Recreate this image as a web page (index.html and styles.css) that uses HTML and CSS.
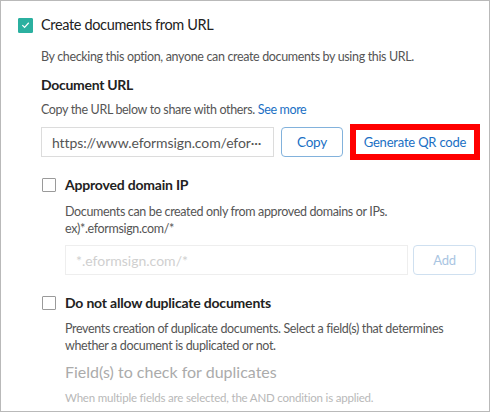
FILE: index.html
```html
<!DOCTYPE html>
<html>
<head>
<meta charset="utf-8">
<link rel="stylesheet" href="styles.css">
</head>
<body>
<div class="panel">
  <div class="opt-row main">
    <span class="cb checked"><svg viewBox="0 0 14 14" width="14" height="14"><path d="M3.6 7.1 L6 9.5 L10.5 4.6" fill="none" stroke="#fff" stroke-width="1.3"/></svg></span>
    <span class="title">Create documents from URL</span>
  </div>
  <div class="body">
    <p class="desc d1">By checking this option, anyone can create documents by using this URL.</p>
    <h3 class="sub">Document URL</h3>
    <p class="desc d2">Copy the URL below to share with others. <a class="link">See more</a></p>
    <div class="url-row">
      <div class="input url">https://www.eformsign.com/efor···</div>
      <button class="btn copy">Copy</button>
      <div class="hl"><button class="btn qr">Generate QR code</button></div>
    </div>
    <div class="opt-row sub-opt o2">
      <span class="cb"></span>
      <span class="title">Approved domain IP</span>
    </div>
    <div class="inner">
      <p class="desc d3">Documents can be created only from approved domains or IPs.<br>ex)*.eformsign.com/*</p>
      <div class="url-row r2">
        <div class="input dis">*.eformsign.com/*</div>
        <button class="btn add">Add</button>
      </div>
    </div>
    <div class="opt-row sub-opt o3">
      <span class="cb"></span>
      <span class="title">Do not allow duplicate documents</span>
    </div>
    <div class="inner">
      <p class="desc d4">Prevents creation of duplicate documents. Select a field(s) that determines<br>whether a document is duplicated or not.</p>
      <h3 class="muted">Field(s) to check for duplicates</h3>
      <p class="small">When multiple fields are selected, the AND condition is applied.</p>
    </div>
  </div>
</div>
</body>
</html>
```
FILE: styles.css
```css
* { box-sizing: border-box; }
html, body { margin: 0; padding: 0; background: #fff; }
body { font-family: Lato, "Noto Sans", sans-serif; color: #222; }
.panel {
  width: 490px; height: 412px; border: 1px solid #b9b9b9;
  padding: 14px 0 0 17px; overflow: hidden;
}
.opt-row { display: flex; align-items: center; height: 20px; }
.cb {
  width: 14px; height: 14px; border: 1px solid #9a9a9a; border-radius: 1px;
  display: inline-flex; align-items: center; justify-content: center; flex: none; background: #fff;
}
.cb.checked { width: 15px; height: 15px; background: #2bb0a0; border-color: #2bb0a0; }
.main .title { margin-left: 8px; font-size: 14.5px; letter-spacing: -0.35px; color: #222; line-height: 20px; }
.body { padding-left: 23px; }
.desc { margin: 0; font-size: 12.5px; letter-spacing: -0.35px; color: #555; line-height: 18px; }
.d1 { margin-top: 13px; }
.sub { margin: 9px 0 0; font-size: 14px; letter-spacing: -0.3px; font-weight: 700; color: #222; line-height: 20px; }
.d2 { margin-top: 6px; }
.link { color: #1a6fc4; }
.url-row { display: flex; align-items: center; margin-top: 5px; }
.input {
  height: 30px; border: 1px solid #dcdcdc; font-size: 14px; color: #555;
  display: flex; align-items: center; padding: 0 4px 0 10px; white-space: nowrap; overflow: hidden;
}
.url { width: 233px; letter-spacing: -0.1px; }
.btn {
  font-family: inherit; background: #fff; height: 30px; border-radius: 4px;
  font-size: 13px; letter-spacing: -0.2px; color: #1a6fc4; padding: 0; cursor: pointer;
}
.copy { width: 62px; margin-left: 7px; border: 1px solid #82b2dc; font-size: 13.5px; }
.hl { margin-left: 7px; border: 6px solid #f00; width: 130px; height: 36px; display: flex; }
.qr { border: none; width: 100%; height: 100%; border-radius: 0; }
.o2 { margin-top: 15px; }
.sub-opt .title { margin-left: 9px; font-size: 14px; letter-spacing: -0.2px; font-weight: 700; color: #222; line-height: 20px; }
.sub-opt .cb { margin-left: 1px; }
.inner { padding-left: 24px; }
.d3 { margin-top: 8px; line-height: 17px; }
.r2 { margin-top: 8px; }
.dis { width: 343px; border-color: #eeeeee; color: #d0d0d0; }
.add { width: 63px; margin-left: 5px; border: 1px solid #cfe0f0; color: #a9c5e2; }
.o3 { margin-top: 18px; }
.d4 { margin-top: 7px; line-height: 17px; }
.muted { margin: 8px 0 0; font-size: 16px; font-weight: 400; color: #ababab; line-height: 20px; }
.small { margin: 8px 0 0; font-size: 11.5px; letter-spacing: -0.2px; color: #b8b8b8; line-height: 16px; }
```
